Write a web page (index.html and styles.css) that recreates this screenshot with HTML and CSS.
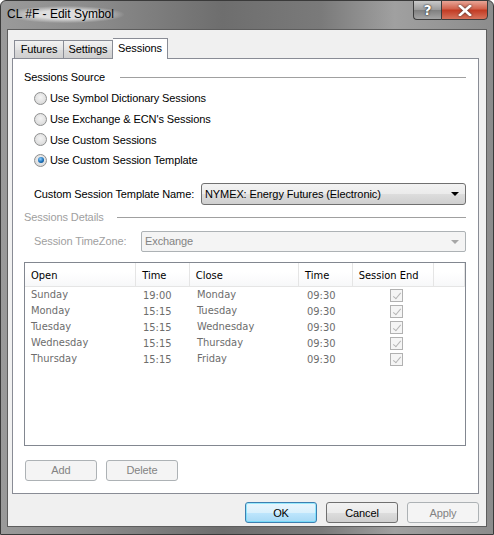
FILE: index.html
```html
<!DOCTYPE html>
<html>
<head>
<meta charset="utf-8">
<link rel="stylesheet" href="styles.css">
</head>
<body>
<div class="window">
  <div class="titlebar">
    <div class="title">CL #F - Edit Symbol</div>
    <div class="caption-btns">
      <div class="cbtn help">?</div>
      <div class="cbtn close"><svg width="14" height="11" viewBox="0 0 14 11"><path d="M2 1 L12 10 M12 1 L2 10" stroke="#fff" stroke-width="2.6" stroke-linecap="square"/></svg></div>
    </div>
  </div>
  <div class="client">
    <div class="tabs">
      <div class="tab">Futures</div>
      <div class="tab">Settings</div>
      <div class="tab active">Sessions</div>
    </div>
    <div class="panel">
      <div class="group-head"><span>Sessions Source</span><div class="rule"></div></div>
      <div class="radios">
        <div class="radio-row"><span class="radio"></span>Use Symbol Dictionary Sessions</div>
        <div class="radio-row"><span class="radio"></span>Use Exchange &amp; ECN's Sessions</div>
        <div class="radio-row"><span class="radio"></span>Use Custom Sessions</div>
        <div class="radio-row"><span class="radio checked"></span>Use Custom Session Template</div>
      </div>
      <div class="field-row template">
        <span class="label">Custom Session Template Name:</span>
        <div class="combo"><span>NYMEX: Energy Futures (Electronic)</span><span class="arrow"></span></div>
      </div>
      <div class="group-head disabled"><span>Sessions Details</span><div class="rule"></div></div>
      <div class="field-row tz">
        <span class="label dis">Session TimeZone:</span>
        <div class="combo dis"><span>Exchange</span><span class="arrow"></span></div>
      </div>
      <div class="grid">
        <div class="grid-head">
          <div class="c c1">Open</div>
          <div class="c c2">Time</div>
          <div class="c c3">Close</div>
          <div class="c c4">Time</div>
          <div class="c c5">Session End</div>
          <div class="c c6"></div>
        </div>
        <div class="grid-body">
          <div class="grow"><div class="c c1">Sunday</div><div class="c c2">19:00</div><div class="c c3">Monday</div><div class="c c4">09:30</div><div class="c c5"><span class="chk"></span></div></div>
          <div class="grow"><div class="c c1">Monday</div><div class="c c2">15:15</div><div class="c c3">Tuesday</div><div class="c c4">09:30</div><div class="c c5"><span class="chk"></span></div></div>
          <div class="grow"><div class="c c1">Tuesday</div><div class="c c2">15:15</div><div class="c c3">Wednesday</div><div class="c c4">09:30</div><div class="c c5"><span class="chk"></span></div></div>
          <div class="grow"><div class="c c1">Wednesday</div><div class="c c2">15:15</div><div class="c c3">Thursday</div><div class="c c4">09:30</div><div class="c c5"><span class="chk"></span></div></div>
          <div class="grow"><div class="c c1">Thursday</div><div class="c c2">15:15</div><div class="c c3">Friday</div><div class="c c4">09:30</div><div class="c c5"><span class="chk"></span></div></div>
        </div>
      </div>
      <div class="grid-btns">
        <div class="btn dis">Add</div>
        <div class="btn dis">Delete</div>
      </div>
    </div>
    <div class="footer">
      <div class="btn default">OK</div>
      <div class="btn">Cancel</div>
      <div class="btn dis">Apply</div>
    </div>
  </div>
</div>
</body>
</html>
```

FILE: styles.css
```css
* { box-sizing: border-box; }
html, body { margin: 0; padding: 0; }
body {
  width: 494px; height: 535px; overflow: hidden;
  font-family: "Liberation Sans", Arial, sans-serif;
  font-size: 11px; letter-spacing: -0.1px; color: #000;
  background: #fff;
}
.window {
  width: 494px; height: 535px;
  border: 1px solid #3a3a3a;
  border-radius: 6px 6px 0 0;
  background: linear-gradient(90deg, #9a9a9a 0%, #8a8a8a 20%, #6e6e6e 45%, #7a7a7a 65%, #a0a0a0 80%, #8c8c8c 100%);
  display: flex; flex-direction: column;
  padding: 0 6px 7px 6px;
}
.titlebar {
  height: 28px; display: flex; align-items: flex-start; justify-content: space-between;
}
.title {
  margin-top: 5px;
  font-size: 12px; letter-spacing: 0; color: #000;
  padding: 1px 10px 2px 0;
  background: radial-gradient(ellipse at center, rgba(235,235,235,0.85) 35%, rgba(235,235,235,0) 72%);
}
.caption-btns { display: flex; margin-right: -1px; margin-top: -1px; }
.cbtn {
  height: 20px; border: 1px solid #3c3c3c; display: flex; align-items: center; justify-content: center;
  font-weight: bold; color: #fff; font-size: 14px;
}
.help {
  width: 28px; border-radius: 0 0 0 4px; border-right: none;
  background: linear-gradient(#c9c9c9, #9a9a9a 50%, #7f7f7f 51%, #a5a5a5);
  text-shadow: 0 0 2px #333, 0 0 1px #000;
  font-family: "DejaVu Sans", sans-serif;
}
.close {
  width: 47px; border-radius: 0 0 4px 0;
  background: linear-gradient(#e8a597, #d1604a 45%, #c23a22 50%, #d6735c);
}
.close svg { filter: drop-shadow(0 0 1px #333); }
.client {
  flex: 1;
  background: #f0f0f0;
  border: 1px solid #5d5d5d;
  padding: 7px 7px 0 4px;
  display: flex; flex-direction: column;
}
.tabs { display: flex; height: 21px; padding-left: 2px; align-items: flex-end; }
.tab {
  height: 18px; width: 49px; text-align: center; line-height: 17px;
  border: 1px solid #898c95; border-bottom: none; border-right: none;
  background: linear-gradient(#f2f2f2, #e3e3e3 50%, #dbdbdb 51%, #cfcfcf);
  color: #000;
}
.tab:nth-child(2) { width: 50px; border-right: 1px solid #898c95; }
.tab.active {
  height: 21px; width: 55px; background: #fff; border-right: 1px solid #898c95;
  line-height: 18px; position: relative; z-index: 2;
  margin-bottom: -1px; border-left: none;
}
.panel {
  height: 436px; background: #fff;
  border: 1px solid #898c95;
  padding: 11px 12px 0 11px;
  display: flex; flex-direction: column;
}
.group-head { display: flex; align-items: center; height: 14px; }
.group-head .rule { flex: 1; height: 1px; background: #a0a0a0; margin-left: 15px; margin-top: 1px; }
.group-head.disabled span { color: #a0a0a0; }
.group-head.disabled .rule { margin-left: 13px; }
.radios { padding-left: 10px; margin-top: 4px; display: flex; flex-direction: column; }
.radio-row { display: flex; align-items: center; height: 20.7px; }
.radio {
  width: 13px; height: 13px; border-radius: 50%;
  border: 1px solid #8e8f8f;
  background: radial-gradient(circle at 50% 40%, #f4f4f4 0%, #e0e0e0 60%, #cfcfcf 100%);
  margin-right: 3px; position: relative;
}
.radio.checked::after {
  content: ""; position: absolute; left: 2.5px; top: 2.5px; width: 6px; height: 6px; border-radius: 50%;
  background: radial-gradient(circle at 40% 35%, #8fd0ff 0%, #1a6fb8 55%, #0b3f70 100%);
}
.field-row { display: flex; align-items: center; }
.field-row .label { width: 177px; padding-left: 10px; }
.field-row.template { margin-top: 12px; height: 22px; }
.field-row.tz { margin-top: 7px; height: 21px; }
.field-row.tz .label { width: 117px; }
.group-head.disabled { margin-top: 5px; }
.label.dis { color: #a0a0a0; }
.combo {
  flex: 1; height: 22px; border: 1px solid #707070; border-radius: 3px;
  background: linear-gradient(#f2f2f2, #ebebeb 50%, #dddddd 51%, #cfcfcf);
  display: flex; align-items: center; justify-content: space-between;
  padding: 0 6px 0 3px; color: #000;
}
.combo .arrow {
  width: 0; height: 0; border-left: 4px solid transparent; border-right: 4px solid transparent;
  border-top: 4px solid #000; margin-top: 1px;
}
.combo.dis {
  height: 21px; background: #f4f4f4; border-color: #adb2b5; border-radius: 2px; color: #838383;
}
.combo.dis .arrow { border-top-color: #a6a6a6; }
.grid {
  margin-top: 10px; height: 184px; border: 1px solid #828790; background: #fff;
  font-family: "DejaVu Sans Condensed", "DejaVu Sans", sans-serif; font-size: 11px; letter-spacing: 0;
  display: flex; flex-direction: column;
}
.grid-head {
  display: flex; height: 24px; border-bottom: 1px solid #e5e5e5;
  background: linear-gradient(#fff, #fff 40%, #f7f8f9);
  color: #000;
}
.grid-head .c { border-right: 1px solid #e5e5e5; display: flex; align-items: center; padding-left: 6px; padding-top: 3px; }
.c1 { width: 112px; }
.c2 { width: 54px; }
.c3 { width: 110px; }
.c4 { width: 54px; }
.c5 { width: 82px; }
.c6 { width: 31px; }
.grid-body { color: #6d6d6d; }
.grow { display: flex; height: 16px; align-items: center; }
.grow .c { padding-left: 6px; }
.grow .c2, .grow .c4 { padding-top: 2px; }
.grow .c5 { display: flex; justify-content: center; padding-left: 0; padding-top: 1px; }
.chk {
  width: 13px; height: 13px; border: 1px solid #b1b1b1; background: #f5f5f5; position: relative; display: block;
}
.chk::after {
  content: ""; position: absolute; left: 4px; top: 1px; width: 3px; height: 7px;
  border-right: 1.5px solid #b5b5b5; border-bottom: 1.5px solid #b5b5b5; transform: rotate(40deg);
}
.grid-btns { display: flex; gap: 9px; margin-top: 14px; padding-left: 1px; }
.btn {
  width: 72px; height: 21px; border: 1px solid #707070; border-radius: 3px;
  background: linear-gradient(#f2f2f2, #ebebeb 50%, #dddddd 51%, #cfcfcf);
  display: flex; align-items: center; justify-content: center; color: #000;
}
.btn.dis { background: #f4f4f4; border-color: #adb2b5; color: #838383; }
.btn.default {
  border-color: #3c7fb1;
  background: linear-gradient(#eaf6fd, #d9f0fc 50%, #bee6fd 51%, #a7d9f5);
  box-shadow: inset 0 0 0 1px #48dbfc80;
}
.footer { display: flex; justify-content: flex-end; gap: 9px; margin-top: 8px; }
```
